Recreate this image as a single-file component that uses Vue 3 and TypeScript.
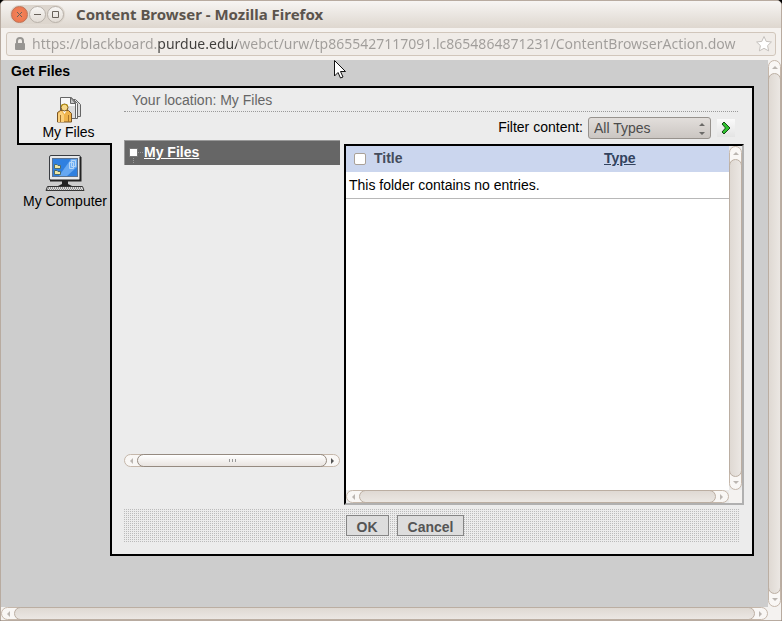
<script setup lang="ts">
import { ref } from 'vue'

interface FileEntry {
  title: string
  type: string
}

const address = ref(
  'https://blackboard.purdue.edu/webct/urw/tp8655427117091.lc8654864871231/ContentBrowserAction.dow'
)
const filter = ref('All Types')
const allSelected = ref(false)
const entries = ref<FileEntry[]>([])
</script>

<template>
  <div class="window">
    <header class="titlebar">
      <div class="controls">
        <button class="control close" aria-label="Close">
          <svg width="7" height="7" viewBox="0 0 7 7"><path d="M1 1L6 6M6 1L1 6" /></svg>
        </button>
        <button class="control" aria-label="Minimize">
          <svg width="7" height="7" viewBox="0 0 7 7"><path d="M0 3.5H7" /></svg>
        </button>
        <button class="control" aria-label="Maximize">
          <svg width="7" height="7" viewBox="0 0 7 7"><path d="M0.5 0.5H6.5V6.5H0.5Z" /></svg>
        </button>
      </div>
      <h1 class="window-title">Content Browser - Mozilla Firefox</h1>
    </header>

    <div class="toolbar">
      <div class="address">
        <svg class="lock" width="12" height="14" viewBox="0 0 12 14">
          <path d="M3 6V4A3 3 0 0 1 9 4V6" fill="none" stroke="#979592" stroke-width="2" />
          <rect x="1" y="6" width="10" height="7" rx="1" fill="#979592" />
        </svg>
        <input v-model="address" class="url" type="text" aria-label="Address" spellcheck="false" />
        <svg class="star" width="18" height="18" viewBox="0 0 18 18">
          <path
            d="M9 1.5L11.2 6.4L16.4 7L12.6 10.6L13.6 15.9L9 13.3L4.4 15.9L5.4 10.6L1.6 7L6.8 6.4Z"
            fill="#fff"
            stroke="#c4c0bc"
            stroke-linejoin="round"
          />
        </svg>
      </div>
    </div>

    <div class="viewport">
      <main class="page">
        <h2 class="page-title">Get Files</h2>
        <div class="picker">
          <nav class="tabs">
            <a class="tab active" href="#my-files">
              <svg width="26" height="27" viewBox="0 0 26 27">
                <path d="M10.5 3.500H19.5L24.500 8.500V20.500H10.500Z" fill="#ddd" stroke="#666" />
                <path d="M7.500 3.500H17.500L21.500 7.500V22.500H7.500Z" fill="#f6f6f6" stroke="#666" />
                <path d="M4.500 1.500H15.500L19.500 6.500V22.500H4.500Z" fill="#f8f8f8" stroke="#666" />
                <path d="M14.500 1.500V7.500H19.500Z" fill="#c8c8c8" stroke="#666" />
                <path d="M11 10H19V22H14Z" fill="#dcdcdc" />
                <path d="M1.500 26V16.500L4.500 14.500H12.500L15.500 17.500V26Z" fill="#eeb34c" stroke="#7a5423" />
                <path d="M2 18L5 15L8 19V26H2Z" fill="#fbd07c" />
                <path d="M4.500 19V26M12.500 19V26" stroke="#a87428" />
                <path d="M6 14H11L8.500 18Z" fill="#fff" />
                <ellipse cx="8.500" cy="11.500" rx="3.500" ry="3.500" fill="#f7d98a" stroke="#79561b" />
                <path d="M5 11Q8.500 6 12 11V9L10 8H7L5 9Z" fill="#b69316" />
              </svg>
              <span>My Files</span>
            </a>
            <a class="tab" href="#my-computer">
              <svg width="40" height="38" viewBox="0 0 40 38">
                <rect x="4.500" y="1.500" width="31" height="25" rx="1.500" fill="#e8eaec" stroke="#3a3d42" />
                <path d="M35.500 3V26.500H5" fill="none" stroke="#222" stroke-width="2" />
                <rect x="7.500" y="4.500" width="25" height="18" fill="#2f80e0" stroke="#5c7390" />
                <path d="M14 22L26 5H32V13L22 22Z" fill="#66a8f2" />
                <path d="M9.500 10.500H12L13 11.500H15.500V14.500H9.500Z" fill="#f0e7a4" stroke="#4e6c6c" />
                <path d="M9.500 16.500H12L13 17.500H15.500V20.500H9.500Z" fill="#f0e7a4" stroke="#4e6c6c" />
                <path d="M26.500 6.500H30.500V12.500H26.500ZM24.500 8.500H28.500V14.500H24.500Z" fill="#6cadf4" stroke="#b7d7f6" />
                <path d="M17 27H23V30L27 32H13L17 30Z" fill="#222" />
                <path d="M2.500 32.500H37.500L39 36.500H1Z" fill="#ddd" stroke="#333" />
                <path d="M3 34H37M2 36H38" stroke="#444" stroke-dasharray="1 1" />
              </svg>
              <span>My Computer</span>
            </a>
          </nav>

          <section class="panel">
            <p class="location">Your location: My Files</p>

            <form class="filter" @submit.prevent>
              <label for="content-filter">Filter content:</label>
              <span class="select-box">
                <select id="content-filter" v-model="filter">
                  <option>All Types</option>
                </select>
                <svg width="8" height="14" viewBox="0 0 8 14">
                  <path d="M1 4H7L4 1ZM1 10H7L4 13Z" fill="#6b6a68" />
                </svg>
              </span>
              <button class="go" aria-label="Apply filter">
                <svg width="10" height="14" viewBox="0 0 10 14">
                  <path
                    d="M1 3L3 1L9 7L3 13L1 11L4.500 7Z"
                    fill="#2fc22f"
                    stroke="#174917"
                    stroke-linejoin="bevel"
                  />
                </svg>
              </button>
            </form>

            <div class="browser">
              <div class="tree">
                <div class="node">
                  <svg width="16" height="23" viewBox="0 0 16 23">
                    <path d="M10 11.500H16M5.500 17V23" stroke="#999" stroke-dasharray="1 1" />
                    <rect x="1.500" y="7.500" width="8" height="8" fill="#fff" stroke="#777" />
                  </svg>
                  <a href="#my-files">My Files</a>
                </div>
                <div class="scroll horizontal live">
                  <button class="arrow" aria-label="Scroll left"><i class="tri left"></i></button>
                  <div class="thumb"><i class="grip"></i></div>
                  <button class="arrow" aria-label="Scroll right"><i class="tri right"></i></button>
                </div>
              </div>

              <div class="frame">
                <div class="listing">
                  <table>
                    <thead>
                      <tr>
                        <th class="check">
                          <input v-model="allSelected" type="checkbox" aria-label="Select all" />
                        </th>
                        <th class="name">Title</th>
                        <th class="kind"><a href="#sort-type">Type</a></th>
                      </tr>
                    </thead>
                    <tbody>
                      <tr v-for="entry in entries" :key="entry.title">
                        <td></td>
                        <td>{{ entry.title }}</td>
                        <td>{{ entry.type }}</td>
                      </tr>
                      <tr v-if="entries.length === 0">
                        <td colspan="3">This folder contains no entries.</td>
                      </tr>
                    </tbody>
                  </table>
                </div>
                <div class="scroll vertical">
                  <button class="arrow" aria-label="Scroll up"><i class="tri up"></i></button>
                  <div class="thumb"></div>
                  <button class="arrow" aria-label="Scroll down"><i class="tri down"></i></button>
                </div>
                <div class="scroll horizontal">
                  <button class="arrow" aria-label="Scroll left"><i class="tri left"></i></button>
                  <div class="thumb"></div>
                  <button class="arrow" aria-label="Scroll right"><i class="tri right"></i></button>
                </div>
                <div class="corner"></div>
              </div>
            </div>

            <footer class="actions">
              <button class="action">OK</button>
              <button class="action">Cancel</button>
            </footer>
          </section>
        </div>
      </main>

      <div class="scroll vertical">
        <button class="arrow" aria-label="Scroll up"><i class="tri up"></i></button>
        <div class="thumb"></div>
        <button class="arrow" aria-label="Scroll down"><i class="tri down"></i></button>
      </div>
      <div class="scroll horizontal">
        <button class="arrow" aria-label="Scroll left"><i class="tri left"></i></button>
        <div class="thumb"></div>
        <button class="arrow" aria-label="Scroll right"><i class="tri right"></i></button>
      </div>
      <div class="corner"></div>
    </div>

    <svg class="pointer" width="14" height="21" viewBox="0 0 14 21">
      <path
        d="M1.500 1.500V17L5 13.500L7.500 19L10 18L7.500 12.500H12.500Z"
        fill="#fff"
        stroke="#111"
        stroke-linejoin="miter"
      />
    </svg>
  </div>
</template>

<style>
body {
  margin: 0;
  background: #000;
}
</style>

<style scoped>
* {
  box-sizing: border-box;
}

.window {
  position: relative;
  display: flex;
  flex-direction: column;
  min-height: 100vh;
  border: 1px solid #b8aba0;
  border-radius: 5px 5px 0 0;
  overflow: hidden;
  background: #f4f2f0;
  font: 14px/18px "Liberation Sans", Arial, sans-serif;
  color: #000;
}

button {
  padding: 0;
  border: 0;
  font: inherit;
}

svg {
  display: block;
  flex: none;
}

/* Title bar */
.titlebar {
  display: flex;
  align-items: center;
  gap: 11px;
  height: 27px;
  padding: 0 9px;
  background: linear-gradient(#f7f5f3, #ded7cf);
}

.controls {
  display: flex;
  gap: 1px;
  padding: 1px;
  border-radius: 9px;
  background: #ddd6ce;
}

.control {
  display: grid;
  place-items: center;
  width: 17px;
  height: 17px;
  border: 1px solid #b9b2aa;
  border-radius: 50%;
  background: linear-gradient(#f8f6f4, #e2dcd5);
}

.control.close {
  border-color: #bd7356;
  background: radial-gradient(#f6855c, #e9724a);
}

.control path {
  fill: none;
  stroke: #69625a;
}

.window-title {
  margin: 0;
  padding-bottom: 2px;
  font: bold 15px/20px "Noto Sans", "Open Sans", sans-serif;
  color: #5b544d;
  white-space: nowrap;
}

/* Address bar */
.toolbar {
  padding: 4px 5px;
  background: #f5f2ef;
}

.address {
  display: flex;
  align-items: center;
  height: 24px;
  padding: 0 2px 0 7px;
  border: 1px solid #d1c6bb;
  border-radius: 3px;
  background: #f0ece8;
}

/* The host's domain is darker than the rest of the address */
.url {
  flex: 1;
  min-width: 0;
  height: 22px;
  margin-left: 6px;
  padding: 0;
  border: 0;
  outline: 0;
  font: 14px/22px "Noto Sans", "Open Sans", sans-serif;
  background: linear-gradient(90deg, #a09d9a 126px, #403e3c 126px 205px, #a09d9a 205px);
  background-clip: text;
  -webkit-background-clip: text;
  color: transparent;
}

/* Page and its scrollbars */
.viewport {
  flex: 1;
  display: grid;
  grid-template-columns: minmax(0, 1fr) 13px;
  grid-template-rows: 1fr 13px;
}

.page {
  padding: 2px 14px 51px 10px;
  background: #cdcdcd;
}

.page-title {
  margin: 0 0 6px;
  font-size: 14px;
  line-height: 18px;
}

.picker {
  display: flex;
  align-items: flex-start;
  padding-left: 6px;
}

.tabs {
  flex: none;
  width: 93px;
}

.tab {
  display: flex;
  flex-direction: column;
  align-items: center;
  padding: 9px 0 0 3px;
  color: #000;
  text-decoration: none;
  white-space: nowrap;
}

.tab.active {
  position: relative;
  width: 95px;
  height: 59px;
  padding: 8px 0 0 6px;
  border: 2px solid #000;
  border-right: 0;
  background: #ececec;
}

/* Main panel */
.panel {
  flex: 1;
  min-width: 0;
  padding: 0 8px 11px 12px;
  border: 2px solid #000;
  background: #ececec;
}

.location {
  height: 24px;
  margin: 0 6px 0 0;
  padding: 3px 8px;
  border-bottom: 1px dotted #999;
  color: #666;
}

.filter {
  display: flex;
  align-items: center;
  justify-content: flex-end;
  height: 28px;
  padding: 5px 9px 1px 0;
}

.filter label {
  padding-bottom: 2px;
}

.select-box {
  position: relative;
  width: 123px;
  margin: 0 6px 0 5px;
}

.select-box select {
  display: block;
  appearance: none;
  width: 100%;
  height: 22px;
  padding: 0 5px;
  border: 1px solid #97928d;
  border-radius: 3px;
  background: linear-gradient(#e2dedb, #cbc6c2);
  font: inherit;
  color: #4c4c4c;
}

.select-box svg {
  position: absolute;
  top: 5px;
  right: 5px;
  pointer-events: none;
}

.go {
  display: grid;
  place-items: center;
  width: 18px;
  height: 18px;
  background: linear-gradient(#fafafa, #e4e4e4);
}

.browser {
  display: grid;
  grid-template-columns: minmax(0, 27fr) minmax(0, 50fr);
  gap: 4px;
}

.tree {
  display: flex;
  flex-direction: column;
  justify-content: space-between;
  padding-bottom: 38px;
}

.node {
  display: flex;
  height: 25px;
  padding-left: 3px;
  border: solid #999;
  border-width: 1px 0 0 1px;
  background: #666;
  line-height: 23px;
}

.node a {
  font-weight: bold;
  color: #fff;
}

.frame {
  display: grid;
  grid-template-columns: minmax(0, 1fr) 13px;
  grid-template-rows: minmax(344px, 1fr) 13px;
  margin-top: 4px;
  border: 2px solid;
  border-color: #000 #b0b0b0 #b0b0b0 #000;
}

.listing {
  background: #fff;
}

table {
  width: 100%;
  border-collapse: collapse;
  table-layout: fixed;
}

th {
  height: 26px;
  padding: 0 0 2px;
  background: #cbd6ee;
  color: #444c5c;
  text-align: left;
}

.check {
  width: 28px;
  padding: 0 0 0 8px;
}

.kind {
  width: 125px;
}

.kind a {
  color: #33435e;
}

.check input {
  display: block;
  appearance: none;
  width: 12px;
  height: 12px;
  margin: 0;
  border: 1px solid #aaa198;
  border-radius: 2px;
  background: #fff;
}

.check input:checked {
  background: #7a8bab;
}

td {
  height: 26px;
  padding: 0 3px;
  border-bottom: 1px solid #b8b8b8;
}

.actions {
  display: flex;
  justify-content: center;
  gap: 8px;
  height: 34px;
  margin: 4px 4px 0 0;
  padding: 6px 54px 7px 0;
  background: radial-gradient(circle at 0 0, #bbb 1px, transparent 1px) 0 0 / 2px 2px;
}

.action {
  padding: 3px 10px 0;
  border: 1px solid #858585;
  background: #ddd;
  font-weight: bold;
  line-height: 16px;
  color: #555;
}

/* Scrollbars */
.scroll {
  display: flex;
  border: 1px solid #c5b7aa;
  border-radius: 7px;
  background: #f9f7f5;
}

.vertical {
  flex-direction: column;
  width: 13px;
}

.horizontal {
  height: 13px;
}

.thumb {
  flex: 1;
  display: grid;
  place-items: center;
  margin: -1px;
  border: 1px solid #bbaea2;
  border-radius: 7px;
}

.horizontal .thumb {
  background: linear-gradient(#dfd9d3, #ebe7e3);
}

.vertical .thumb {
  background: linear-gradient(90deg, #dfd9d3, #ebe7e3);
}

.live .thumb {
  border-color: #958a80;
  background: linear-gradient(#fff, #e9e4e0);
}

.grip {
  width: 7px;
  height: 3px;
  background: repeating-linear-gradient(90deg, #999 0 1px, transparent 1px 3px);
}

.arrow {
  display: grid;
  place-items: center;
  width: 13px;
  height: 11px;
  background: none;
}

.vertical .arrow {
  width: 11px;
  height: 13px;
}

.tri {
  border: 3px solid transparent;
}

.tri.left {
  border-left: 0;
  border-right-color: #bbb6b1;
}

.tri.right {
  border-right: 0;
  border-left-color: #bbb6b1;
}

.tri.up {
  border-top: 0;
  border-bottom-color: #bbb6b1;
}

.tri.down {
  border-bottom: 0;
  border-top-color: #bbb6b1;
}

.live .tri.right {
  border-left-color: #555;
}

.corner {
  background: #f4f2f0;
}

.pointer {
  position: absolute;
  top: 58px;
  left: 332px;
}
</style>
